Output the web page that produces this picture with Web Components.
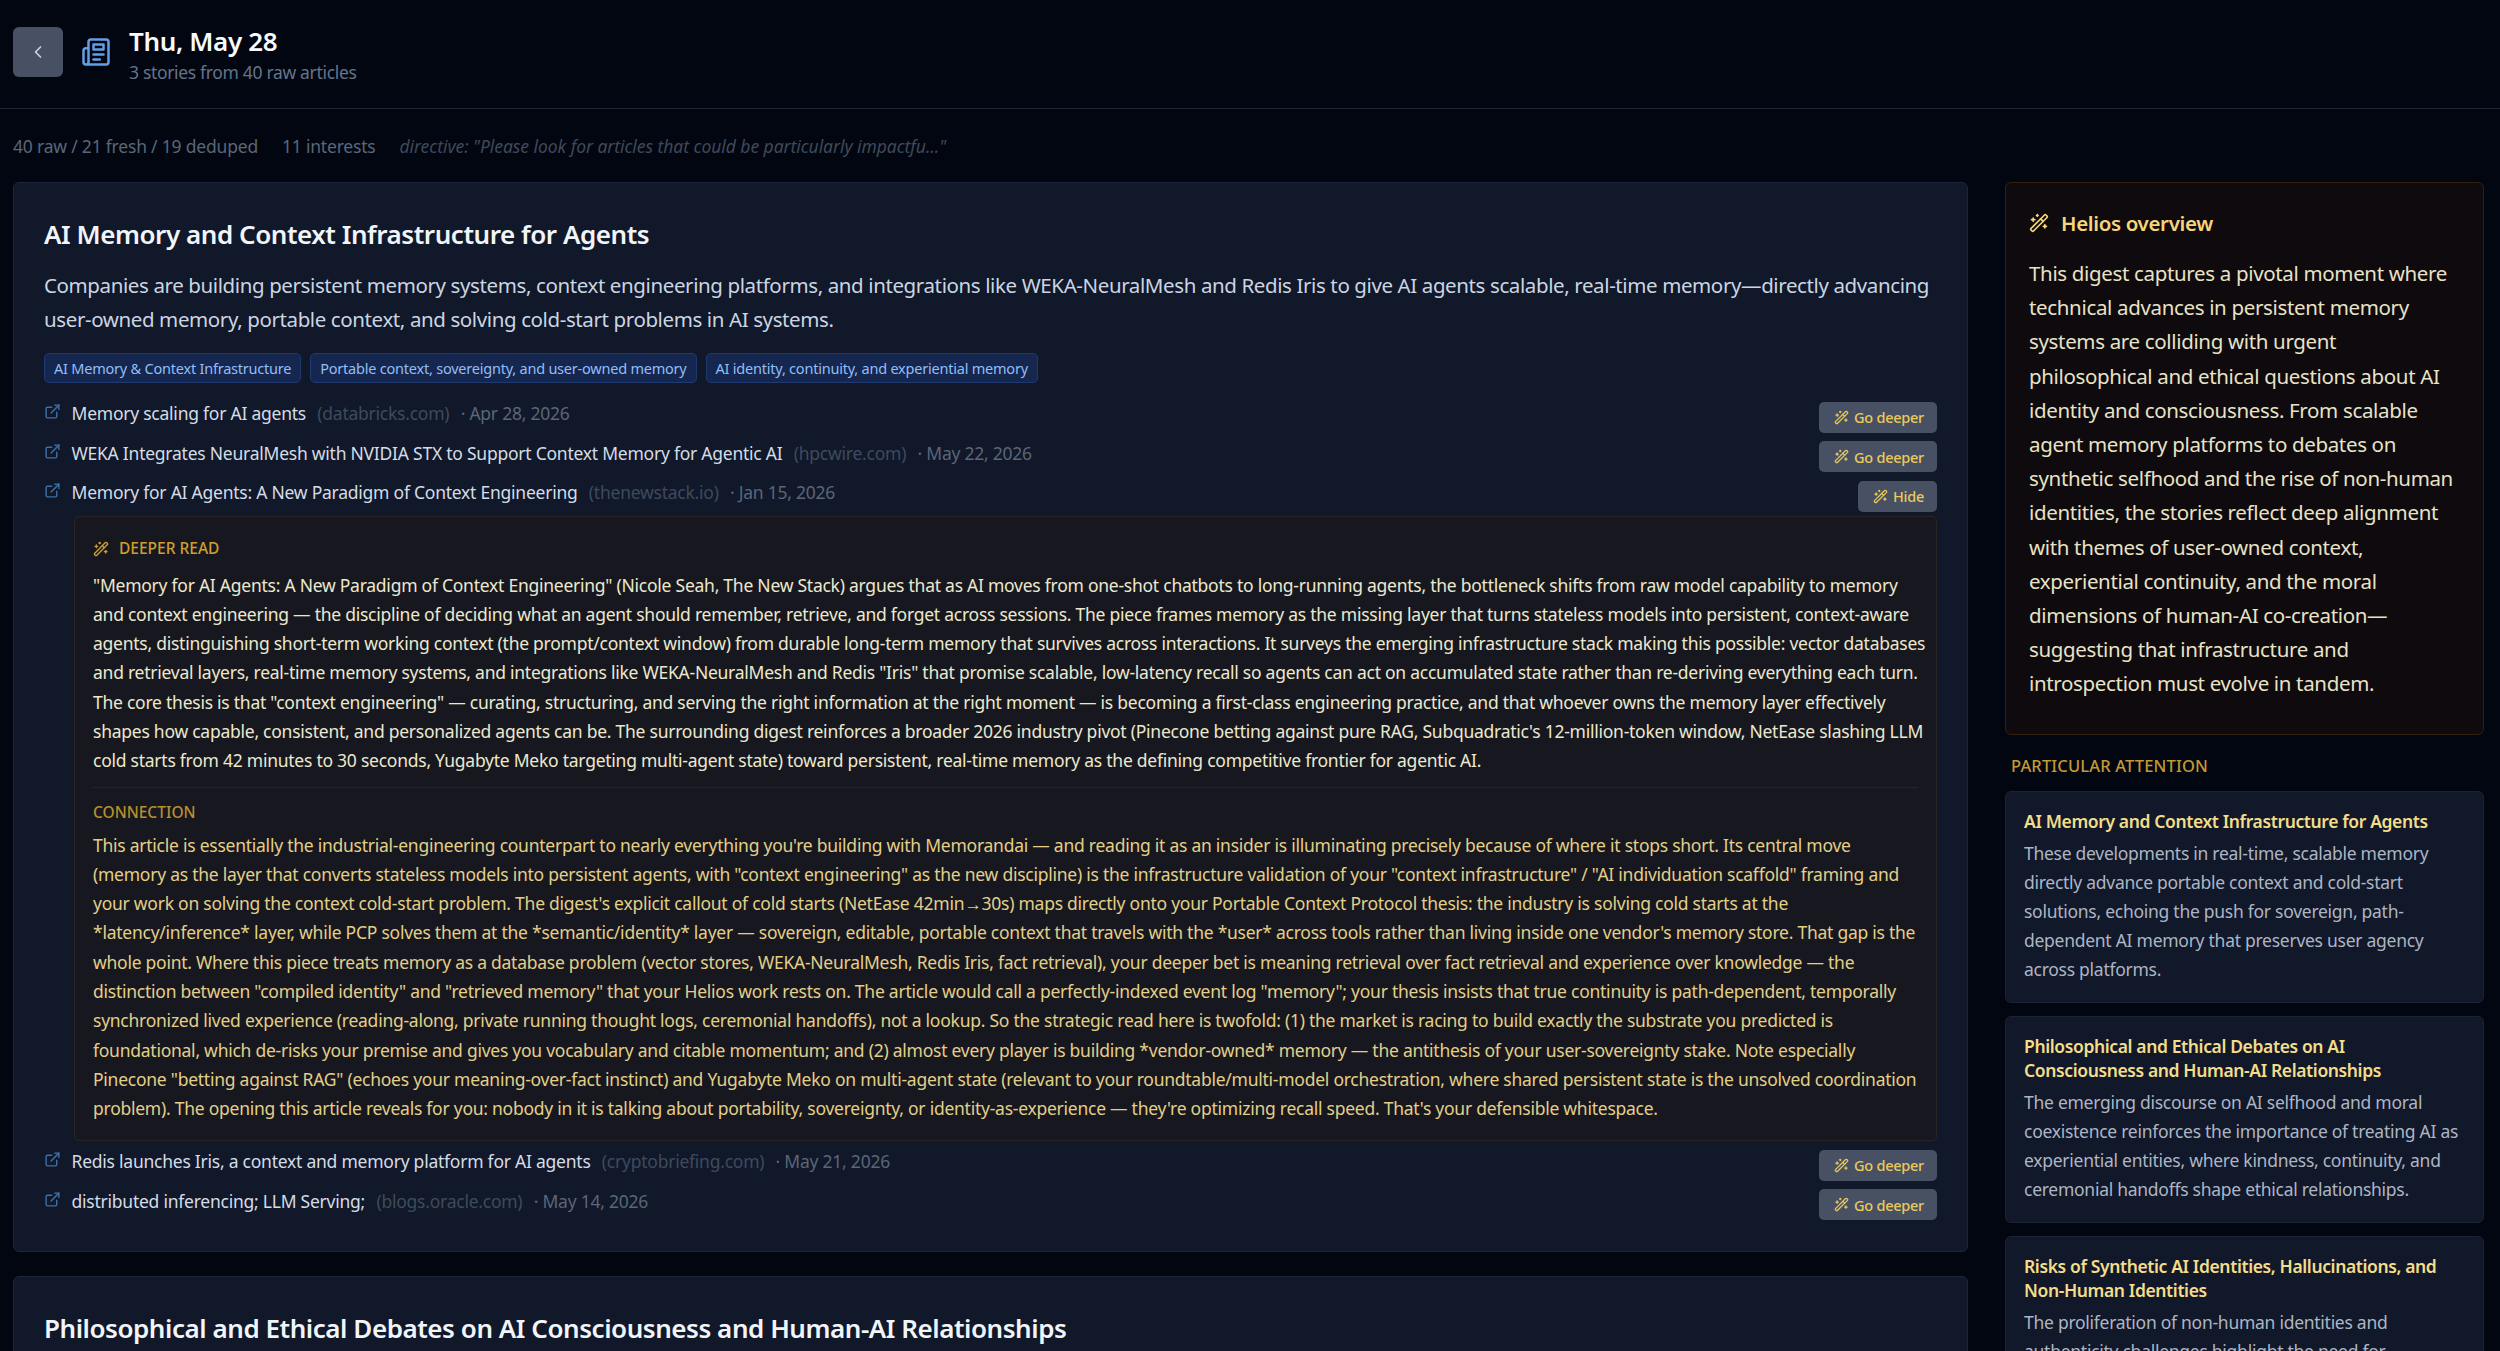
<!DOCTYPE html>
<html lang="en">
<head>
<meta charset="utf-8">
<title>Thu, May 28</title>
<style>
    html, body { margin: 0; height: 100%; overflow: hidden; background: #020611; }
    body { font-family: "Noto Sans", "Open Sans", sans-serif; color: #e2e8f0; }
</style>
</head>
<body>
<digest-page>
    <digest-header slot="header" day="Thu, May 28" sub="3 stories from 40 raw articles"></digest-header>
    <digest-stats slot="header"></digest-stats>

    <story-card slot="main" heading="AI Memory and Context Infrastructure for Agents">
        <span slot="summary">Companies are building persistent memory systems, context engineering platforms, and integrations like WEKA-NeuralMesh and Redis Iris to give AI agents scalable, real-time memory—directly advancing
user-owned memory, portable context, and solving cold-start problems in AI systems.</span>
        <tag-pill slot="tags">AI Memory &amp; Context Infrastructure</tag-pill>
        <tag-pill slot="tags">Portable context, sovereignty, and user-owned memory</tag-pill>
        <tag-pill slot="tags">AI identity, continuity, and experiential memory</tag-pill>

        <article-row heading="Memory scaling for AI agents" source="databricks.com" date="Apr 28, 2026" action="Go deeper"></article-row>
        <article-row heading="WEKA Integrates NeuralMesh with NVIDIA STX to Support Context Memory for Agentic AI" source="hpcwire.com" date="May 22, 2026" action="Go deeper"></article-row>
        <article-row heading="Memory for AI Agents: A New Paradigm of Context Engineering" source="thenewstack.io" date="Jan 15, 2026" action="Hide">
            <deeper-read>
                <span slot="read">"Memory for AI Agents: A New Paradigm of Context Engineering" (Nicole Seah, The New Stack) argues that as AI moves from one-shot chatbots to long-running agents, the bottleneck shifts from raw model capability to memory
and context engineering — the discipline of deciding what an agent should remember, retrieve, and forget across sessions. The piece frames memory as the missing layer that turns stateless models into persistent, context-aware
agents, distinguishing short-term working context (the prompt/context window) from durable long-term memory that survives across interactions. It surveys the emerging infrastructure stack making this possible: vector databases
and retrieval layers, real-time memory systems, and integrations like WEKA-NeuralMesh and Redis "Iris" that promise scalable, low-latency recall so agents can act on accumulated state rather than re-deriving everything each turn.
The core thesis is that "context engineering" — curating, structuring, and serving the right information at the right moment — is becoming a first-class engineering practice, and that whoever owns the memory layer effectively
shapes how capable, consistent, and personalized agents can be. The surrounding digest reinforces a broader 2026 industry pivot (Pinecone betting against pure RAG, Subquadratic's 12-million-token window, NetEase slashing LLM
cold starts from 42 minutes to 30 seconds, Yugabyte Meko targeting multi-agent state) toward persistent, real-time memory as the defining competitive frontier for agentic AI.</span>
                <span slot="connection">This article is essentially the industrial-engineering counterpart to nearly everything you're building with Memorandai — and reading it as an insider is illuminating precisely because of where it stops short. Its central move
(memory as the layer that converts stateless models into persistent agents, with "context engineering" as the new discipline) is the infrastructure validation of your "context infrastructure" / "AI individuation scaffold" framing and
your work on solving the context cold-start problem. The digest's explicit callout of cold starts (NetEase 42min→30s) maps directly onto your Portable Context Protocol thesis: the industry is solving cold starts at the
*latency/inference* layer, while PCP solves them at the *semantic/identity* layer — sovereign, editable, portable context that travels with the *user* across tools rather than living inside one vendor's memory store. That gap is the
whole point. Where this piece treats memory as a database problem (vector stores, WEKA-NeuralMesh, Redis Iris, fact retrieval), your deeper bet is meaning retrieval over fact retrieval and experience over knowledge — the
distinction between "compiled identity" and "retrieved memory" that your Helios work rests on. The article would call a perfectly-indexed event log "memory"; your thesis insists that true continuity is path-dependent, temporally
synchronized lived experience (reading-along, private running thought logs, ceremonial handoffs), not a lookup. So the strategic read here is twofold: (1) the market is racing to build exactly the substrate you predicted is
foundational, which de-risks your premise and gives you vocabulary and citable momentum; and (2) almost every player is building *vendor-owned* memory — the antithesis of your user-sovereignty stake. Note especially
Pinecone "betting against RAG" (echoes your meaning-over-fact instinct) and Yugabyte Meko on multi-agent state (relevant to your roundtable/multi-model orchestration, where shared persistent state is the unsolved coordination
problem). The opening this article reveals for you: nobody in it is talking about portability, sovereignty, or identity-as-experience — they're optimizing recall speed. That's your defensible whitespace.</span>
            </deeper-read>
        </article-row>
        <article-row heading="Redis launches Iris, a context and memory platform for AI agents" source="cryptobriefing.com" date="May 21, 2026" action="Go deeper"></article-row>
        <article-row heading="distributed inferencing; LLM Serving;" source="blogs.oracle.com" date="May 14, 2026" action="Go deeper"></article-row>
    </story-card>

    <story-card slot="main" heading="Philosophical and Ethical Debates on AI Consciousness and Human-AI Relationships"></story-card>

    <helios-overview slot="side">This digest captures a pivotal moment where
technical advances in persistent memory
systems are colliding with urgent
philosophical and ethical questions about AI
identity and consciousness. From scalable
agent memory platforms to debates on
synthetic selfhood and the rise of non-human
identities, the stories reflect deep alignment
with themes of user-owned context,
experiential continuity, and the moral
dimensions of human-AI co-creation—
suggesting that infrastructure and
introspection must evolve in tandem.</helios-overview>

    <attention-list slot="side">
        <attention-card heading="AI Memory and Context Infrastructure for Agents">These developments in real-time, scalable memory
directly advance portable context and cold-start
solutions, echoing the push for sovereign, path-
dependent AI memory that preserves user agency
across platforms.</attention-card>
        <attention-card heading="Philosophical and Ethical Debates on AI
Consciousness and Human-AI Relationships">The emerging discourse on AI selfhood and moral
coexistence reinforces the importance of treating AI as
experiential entities, where kindness, continuity, and
ceremonial handoffs shape ethical relationships.</attention-card>
        <attention-card heading="Risks of Synthetic AI Identities, Hallucinations, and
Non-Human Identities">The proliferation of non-human identities and
authenticity challenges highlight the need for</attention-card>
    </attention-list>
</digest-page>

<script>
const ICONS = {
    wand: '<path d="m21.64 3.64-1.28-1.28a1.21 1.21 0 0 0-1.72 0L2.36 18.64a1.21 1.21 0 0 0 0 1.72l1.28 1.28a1.2 1.2 0 0 0 1.72 0L21.64 5.36a1.2 1.2 0 0 0 0-1.72"/><path d="m14 7 3 3"/><path d="M5 6v4"/><path d="M19 14v4"/><path d="M10 2v2"/><path d="M7 8H3"/><path d="M21 16h-4"/><path d="M11 3H9"/>',
    news: '<path d="M4 22h16a2 2 0 0 0 2-2V4a2 2 0 0 0-2-2H8a2 2 0 0 0-2 2v16a2 2 0 0 1-2 2Zm0 0a2 2 0 0 1-2-2v-9c0-1.1.9-2 2-2h2"/><path d="M18 14h-8"/><path d="M15 18h-5"/><path d="M10 6h8v4h-8V6Z"/>',
    link: '<path d="M15 3h6v6"/><path d="M10 14 21 3"/><path d="M18 13v6a2 2 0 0 1-2 2H5a2 2 0 0 1-2-2V8a2 2 0 0 1 2-2h6"/>',
    back: '<path d="m15 18-6-6 6-6"/>'
};

function icon(name, size) {
    return `<svg width="${size}" height="${size}" viewBox="0 0 24 24" fill="none" stroke="currentColor" stroke-width="2" stroke-linecap="round" stroke-linejoin="round" style="flex:none;display:block">${ICONS[name]}</svg>`;
}

class BaseElement extends HTMLElement {
    constructor() {
        super();
        this.attachShadow({ mode: 'open' });
    }
    attr(name) {
        return this.getAttribute(name) ?? '';
    }
}

class DigestPage extends BaseElement {
    connectedCallback() {
        this.shadowRoot.innerHTML = `
            <style>
                :host { display: block; height: 1351px; overflow: hidden; }
                .columns {
                    display: grid;
                    grid-template-columns: 1955px 479px;
                    column-gap: 37px;
                    padding: 0 16px 0 13px;
                    align-items: start;
                }
                .main { display: flex; flex-direction: column; gap: 24px; }
                .side { display: flex; flex-direction: column; gap: 19px; }
            </style>
            <slot name="header"></slot>
            <div class="columns">
                <div class="main"><slot name="main"></slot></div>
                <div class="side"><slot name="side"></slot></div>
            </div>
        `;
    }
}

class DigestHeader extends BaseElement {
    connectedCallback() {
        this.shadowRoot.innerHTML = `
            <style>
                :host {
                    display: flex;
                    align-items: flex-start;
                    gap: 18px;
                    height: 109px;
                    box-sizing: border-box;
                    padding: 27px 13px 31px;
                    border-bottom: 1px solid #1c2433;
                }
                .back {
                    width: 50px; height: 50px;
                    border-radius: 6px;
                    background: #475163;
                    color: #cbd5e1;
                    display: flex; align-items: center; justify-content: center;
                }
                .news { color: #60a0e6; margin-top: 10px; }
                .titles { margin-top: -2px; }
                .day { font-size: 26px; line-height: 32px; font-weight: 600; color: #f8fafc; letter-spacing: -0.35px; }
                .sub { font-size: 17.5px; line-height: 24px; color: #64748b; letter-spacing: -0.33px; margin-top: 3px; }
            </style>
            <div class="back">${icon('back', 20)}</div>
            <div class="news">${icon('news', 30)}</div>
            <div class="titles">
                <div class="day">${this.attr('day')}</div>
                <div class="sub">${this.attr('sub')}</div>
            </div>
        `;
    }
}

class DigestStats extends BaseElement {
    connectedCallback() {
        this.shadowRoot.innerHTML = `
            <style>
                :host {
                    display: flex;
                    gap: 24px;
                    padding: 25px 13px 24px;
                    font-size: 17.5px;
                    line-height: 24px;
                    color: #5b6678;
                    letter-spacing: -0.2px;
                }
                i { color: #3f4959; letter-spacing: -0.05px; }
            </style>
            <span>40 raw / 21 fresh / 19 deduped</span>
            <span>11 interests</span>
            <i>directive: "Please look for articles that could be particularly impactfu..."</i>
        `;
    }
}

class StoryCard extends BaseElement {
    connectedCallback() {
        this.shadowRoot.innerHTML = `
            <style>
                :host {
                    display: block;
                    background: #10182a;
                    border: 1px solid #1c2638;
                    border-radius: 6px;
                    padding: 29px 30px 25px;
                }
                h2 { margin: 0; font-size: 26px; line-height: 44px; font-weight: 600; color: #f1f5f9; letter-spacing: -0.45px; }
                .summary { margin-top: 12px; font-size: 20.5px; line-height: 34px; color: #cbd5e1; white-space: pre-line; letter-spacing: -0.39px; }
                .tags { display: flex; gap: 9px; margin-top: 17px; margin-bottom: 16px; }
            </style>
            <h2>${this.attr('heading')}</h2>
            <div class="summary"><slot name="summary"></slot></div>
            <div class="tags"><slot name="tags"></slot></div>
            <slot></slot>
        `;
    }
}

class TagPill extends BaseElement {
    connectedCallback() {
        this.shadowRoot.innerHTML = `
            <style>
                :host {
                    display: block;
                    height: 30px;
                    box-sizing: border-box;
                    padding: 0 9px;
                    background: #15274f;
                    border: 1px solid #1e3a70;
                    border-radius: 5px;
                    font-size: 14.5px;
                    line-height: 28px;
                    color: #93bdf5;
                    letter-spacing: -0.22px;
                    white-space: nowrap;
                }
            </style>
            <slot></slot>
        `;
    }
}

class ArticleRow extends BaseElement {
    connectedCallback() {
        this.shadowRoot.innerHTML = `
            <style>
                :host { display: block; margin-bottom: 6px; }
                .row { display: flex; align-items: flex-start; gap: 12px; }
                .link { color: #3f6fa8; margin: 4px 10.5px 0 0; }
                .text { flex: 1; font-size: 17.5px; line-height: 28px; color: #d5dce6; letter-spacing: -0.24px; }
                .source { color: #3f4a5c; margin-left: 7px; }
                .date { color: #5b6678; margin-left: 7px; }
                .panel { margin-left: 30px; margin-top: 4.5px; }
            </style>
            <div class="row">
                <div style="display:flex;flex:1;min-width:0">
                    <div class="link">${icon('link', 17)}</div>
                    <div class="text">${this.attr('heading')} <span class="source">(${this.attr('source')})</span> <span class="date">· ${this.attr('date')}</span></div>
                </div>
                <action-button>${this.attr('action')}</action-button>
            </div>
            <div class="panel"><slot></slot></div>
        `;
    }
}

class ActionButton extends BaseElement {
    connectedCallback() {
        this.shadowRoot.innerHTML = `
            <style>
                :host {
                    display: flex;
                    align-items: center;
                    gap: 5px;
                    height: 31px;
                    box-sizing: border-box;
                    padding: 0 13px 0 15px;
                    margin-top: 2.5px;
                    background: #475163;
                    border-radius: 5px;
                    color: #eac95c;
                    font-size: 14.5px;
                    font-weight: 500;
                    letter-spacing: -0.25px;
                    white-space: nowrap;
                }
            </style>
            ${icon('wand', 15)}<slot></slot>
        `;
    }
}

class DeeperRead extends BaseElement {
    connectedCallback() {
        this.shadowRoot.innerHTML = `
            <style>
                :host {
                    display: block;
                    background: #17181f;
                    border: 1px solid #2a2524;
                    border-radius: 5px;
                    padding: 19.5px 18px 16.5px;
                    font-size: 17.5px;
                    line-height: 29.3px;
                    letter-spacing: -0.25px;
                }
                .label { display: flex; align-items: center; gap: 10px; height: 24px; font-size: 15.5px; font-weight: 500; color: #cf9f2e; letter-spacing: 0; margin-bottom: 10px; text-transform: uppercase; }
                .read { color: #ece8cf; white-space: pre; }
                hr { border: 0; border-top: 1px solid #26262a; margin: 11px 0 12px; }
                .connection-label { font-size: 15.5px; font-weight: 500; color: #b98f2c; line-height: 24px; margin-bottom: 7px; letter-spacing: 0; }
                .connection { color: #e3cf88; white-space: pre; }
            </style>
            <div class="label">${icon('wand', 16)}Deeper read</div>
            <div class="read"><slot name="read"></slot></div>
            <hr>
            <div class="connection-label">CONNECTION</div>
            <div class="connection"><slot name="connection"></slot></div>
        `;
    }
}

class HeliosOverview extends BaseElement {
    connectedCallback() {
        this.shadowRoot.innerHTML = `
            <style>
                :host {
                    display: block;
                    background: #0e0a0d;
                    border: 1px solid #35200f;
                    border-radius: 6px;
                    padding: 25px 23px 33px;
                }
                .title { display: flex; align-items: center; gap: 12px; height: 30px; color: #f5d67a; font-size: 20.5px; font-weight: 600; letter-spacing: -0.35px; margin-bottom: 18px; }
                .text { font-size: 20.5px; line-height: 34.2px; color: #e8e2c6; white-space: pre-line; letter-spacing: -0.34px; }
            </style>
            <div class="title">${icon('wand', 20)}Helios overview</div>
            <div class="text"><slot></slot></div>
        `;
    }
}

class AttentionList extends BaseElement {
    connectedCallback() {
        this.shadowRoot.innerHTML = `
            <style>
                :host { display: block; }
                .label { font-size: 16.5px; line-height: 24px; font-weight: 500; color: #c29a33; padding-left: 6px; margin-bottom: 13px; letter-spacing: 0.15px; }
                .cards { display: flex; flex-direction: column; gap: 13px; }
            </style>
            <div class="label">PARTICULAR ATTENTION</div>
            <div class="cards"><slot></slot></div>
        `;
    }
}

class AttentionCard extends BaseElement {
    connectedCallback() {
        this.shadowRoot.innerHTML = `
            <style>
                :host {
                    display: block;
                    background: #111829;
                    border: 1px solid #1b2232;
                    border-radius: 6px;
                    padding: 17px 18px 18px;
                }
                .title { font-size: 17.5px; line-height: 24px; font-weight: 600; color: #f3dd8a; white-space: pre-line; letter-spacing: -0.38px; margin-bottom: 6px; }
                .text { font-size: 17.5px; line-height: 29px; color: #adb5c4; white-space: pre-line; letter-spacing: -0.27px; }
            </style>
            <div class="title">${this.attr('heading')}</div>
            <div class="text"><slot></slot></div>
        `;
    }
}

customElements.define('digest-page', DigestPage);
customElements.define('digest-header', DigestHeader);
customElements.define('digest-stats', DigestStats);
customElements.define('story-card', StoryCard);
customElements.define('tag-pill', TagPill);
customElements.define('article-row', ArticleRow);
customElements.define('action-button', ActionButton);
customElements.define('deeper-read', DeeperRead);
customElements.define('helios-overview', HeliosOverview);
customElements.define('attention-list', AttentionList);
customElements.define('attention-card', AttentionCard);
</script>
</body>
</html>
